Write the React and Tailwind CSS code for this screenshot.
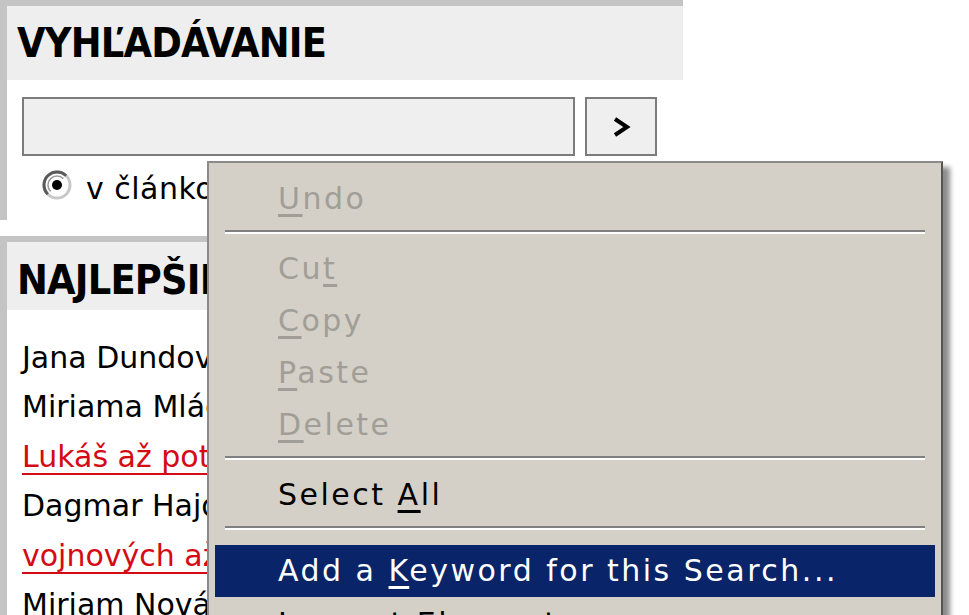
import React from 'react';

const site = { fontFamily: '"DejaVu Sans", "Liberation Sans", sans-serif' };
const headFont = { fontFamily: '"Liberation Sans Narrow", "DejaVu Sans Condensed", "DejaVu Sans", sans-serif' };

const articles = [
  { text: 'Jana Dundová', link: false },
  { text: 'Miriama Mládková', link: false },
  { text: 'Lukáš až potom', link: true },
  { text: 'Dagmar Hajdúová', link: false },
  { text: 'vojnových ažiotáží', link: true },
  { text: 'Miriam Nováková', link: false },
];

function Radio() {
  return (
    <svg width="32" height="32" viewBox="0 0 32 32" className="shrink-0">
      <circle cx="16" cy="16" r="13" fill="#ffffff" stroke="#c8c8c8" strokeWidth="3" />
      <path d="M6.8 25.2 A13 13 0 0 1 25.2 6.8" fill="none" stroke="#5a5a5a" strokeWidth="3" />
      <path d="M9.6 22.4 A9 9 0 0 1 22.4 9.6" fill="none" stroke="#9a9a9a" strokeWidth="1.5" />
      <circle cx="16" cy="16" r="5" fill="#000000" />
    </svg>
  );
}

function MenuItem({ before, mark, after, disabled, active }) {
  const color = active ? 'text-white' : disabled ? 'text-[#a19e97]' : 'text-black';
  return (
    <div className={`h-[52px] flex items-center pl-[63px] text-[30px] leading-none tracking-[2.5px] ${color} ${active ? 'bg-[#0a246a]' : ''}`}>
      <span className="whitespace-nowrap">
        {before}
        <span className="underline decoration-[3px] underline-offset-[5px]">{mark}</span>
        {after}
      </span>
    </div>
  );
}

function Separator({ tall }) {
  return (
    <div className={`${tall ? 'h-[24px]' : 'h-[18px]'} pt-[5px] px-[10px]`}>
      <div className="h-[2px] bg-[#808080]" />
      <div className="h-[2px] bg-white" />
    </div>
  );
}

export default function App() {
  return (
    <div className="relative w-[969px] h-[615px] overflow-hidden bg-white" style={site}>
      <div className="w-[683px]">
        {/* search panel */}
        <section className="h-[220px] border-l-[7px] border-t-[6px] border-[#c4c4c4]">
          <div className="h-[74px] bg-[#eeeeee] flex items-center pl-[10px]">
            <h2 className="text-[41px] font-bold leading-none text-black tracking-[-0.8px]" style={headFont}>VYHĽADÁVANIE</h2>
          </div>
          <div className="pl-[15px] pt-[17px]">
            <div className="flex gap-[10px]">
              <div className="w-[553px] h-[59px] bg-[#efefef] border-2 border-[#7c7c7c]" />
              <button className="w-[72px] h-[59px] bg-[#efefef] border-2 border-[#7c7c7c] flex items-center justify-center">
                <svg width="22" height="24" viewBox="0 0 22 24">
                  <polyline points="5,4 17,12 5,20" fill="none" stroke="#000" strokeWidth="4" strokeLinejoin="miter" />
                </svg>
              </button>
            </div>
            <div className="flex items-center gap-[13px] pl-[19px] pt-[10px]">
              <Radio />
              <span className="text-[30px] leading-none text-black tracking-[0.5px] pt-[8px]">v článkoch</span>
            </div>
          </div>
        </section>

        {/* best rated panel */}
        <section className="mt-[16px] border-l-[7px] border-t-[6px] border-[#c4c4c4]">
          <div className="h-[68px] bg-[#eeeeee] flex items-center pl-[10px] pt-[8px]">
            <h2 className="text-[41px] font-bold leading-none text-black tracking-[-0.8px]" style={headFont}>NAJLEPŠIE HODNOTENÉ</h2>
          </div>
          <ul className="pl-[15px] pt-[23px]">
            {articles.map((a) => (
              <li
                key={a.text}
                className={`h-[49.5px] flex items-center text-[30px] leading-none whitespace-nowrap ${a.link ? 'text-[#d40a14] underline decoration-2 underline-offset-[6px]' : 'text-black'}`}
              >
                {a.text}
              </li>
            ))}
          </ul>
        </section>
      </div>

      {/* context menu */}
      <div className="absolute left-[207px] top-[161px] w-[736px] h-[480px] bg-[#d4d0c8] border-2 border-[#8a8a8a] border-r-[#555555] shadow-[7px_6px_5px_rgba(0,0,0,0.45)] px-[6px] pt-[10px]">
        <MenuItem before="" mark="U" after="ndo" disabled />
        <Separator />
        <MenuItem before="Cu" mark="t" after="" disabled />
        <MenuItem before="" mark="C" after="opy" disabled />
        <MenuItem before="" mark="P" after="aste" disabled />
        <MenuItem before="" mark="D" after="elete" disabled />
        <Separator />
        <MenuItem before="Select " mark="A" after="ll" />
        <Separator tall />
        <MenuItem before="Add a " mark="K" after="eyword for this Search..." active />
        <div className="h-[52px] pl-[63px] pt-[12px] text-[30px] leading-none tracking-[2.5px] text-black whitespace-nowrap">
          <span className="underline decoration-[3px] underline-offset-[5px]">I</span>nspect Element
        </div>
      </div>
    </div>
  );
}
